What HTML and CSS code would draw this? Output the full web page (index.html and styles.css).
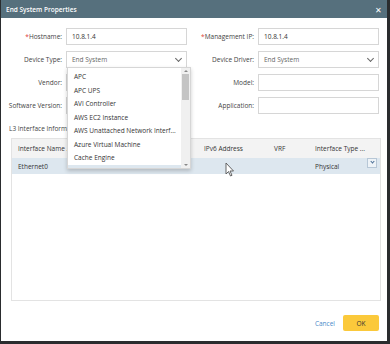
FILE: index.html
```html
<!DOCTYPE html>
<html lang="en">
<head>
  <meta charset="UTF-8">
  <title>End System Properties</title>
  <link rel="stylesheet" href="styles.css">
</head>
<body>
<div class="dialog">
  <div class="titlebar">
    <span>End System Properties</span>
    <span class="close">✕</span>
  </div>

  <div class="body">
    <div class="form">
      <div class="field"><label><i>*</i>Hostname:</label><div class="input">10.8.1.4</div></div>
      <div class="field"><label><i>*</i>Management IP:</label><div class="input">10.8.1.4</div></div>
      <div class="field"><label>Device Type:</label><div class="input select">End System<span class="caret"></span></div></div>
      <div class="field"><label>Device Driver:</label><div class="input select">End System<span class="caret"></span></div></div>
      <div class="field"><label>Vendor:</label><div class="input"></div></div>
      <div class="field"><label>Model:</label><div class="input"></div></div>
      <div class="field"><label>Software Version:</label><div class="input"></div></div>
      <div class="field"><label>Application:</label><div class="input"></div></div>
    </div>

    <div class="section">L3 Interface Information</div>

    <div class="table">
      <div class="row head">
        <div class="c1">Interface Name ...</div>
        <div class="c2"></div>
        <div class="c3">IPv6 Address</div>
        <div class="c4">VRF</div>
        <div class="c5">Interface Type ...</div>
      </div>
      <div class="row sel">
        <div class="c1">Ethernet0</div>
        <div class="c2"></div>
        <div class="c3"></div>
        <div class="c4"></div>
        <div class="c5">Physical<span class="mini"><span class="caret"></span></span></div>
      </div>
    </div>

    <div class="footer">
      <a class="cancel">Cancel</a>
      <button class="ok">OK</button>
    </div>

    <div class="dropdown">
      <ul>
        <li>APC</li>
        <li>APC UPS</li>
        <li>AVI Controller</li>
        <li>AWS EC2 Instance</li>
        <li>AWS Unattached Network Interf...</li>
        <li>Azure Virtual Machine</li>
        <li>Cache Engine</li>
        <li class="hl">End System</li>
      </ul>
      <div class="scroll"><span class="up"></span><span class="thumb"></span><span class="down"></span></div>
    </div>

    <svg class="cursor" width="10" height="15" viewBox="0 0 10 15">
      <path d="M1 1 L1 12 L3.5 9.5 L5.5 14 L7 13.3 L5 9 L8.5 9 Z" fill="#fff" stroke="#555" stroke-width="0.9"/>
    </svg>
  </div>
</div>
</body>
</html>
```

FILE: styles.css
```css
body {
  margin: 0;
  background: #2a2c2e;
  font-family: "Open Sans", "Liberation Sans", sans-serif;
  font-size: 6.5px;
  color: #333;
}
.dialog {
  width: 386px;
  height: 341px;
  margin-left: 1px;
  background: #fff;
  display: flex;
  flex-direction: column;
}
.titlebar {
  height: 18px;
  background: #56707d;
  color: #fff;
  font-weight: 600;
  display: flex;
  align-items: center;
  justify-content: space-between;
  padding: 0 5px 0 5px;
}
.close { font-size: 8px; font-weight: 400; }
.body {
  position: relative;
  flex: 1;
  display: flex;
  flex-direction: column;
}
.form {
  display: grid;
  grid-template-columns: 191px 188px;
  row-gap: 6px;
  padding-top: 10px;
}
.field {
  display: flex;
  align-items: center;
}
.field label {
  width: 61px;
  text-align: right;
  padding-right: 4px;
  color: #444;
  white-space: nowrap;
}
.field:nth-child(even) label { width: 62px; }
.field i { color: #e0423a; font-style: normal; }
.input {
  width: 114px;
  height: 15px;
  border: 1px solid #d6d6d6;
  padding-left: 5px;
  line-height: 15px;
  position: relative;
  color: #333;
}
.select { color: #666; }
.caret {
  position: absolute;
  right: 5px;
  top: 4px;
  width: 4px;
  height: 4px;
  border-right: 1px solid #666;
  border-bottom: 1px solid #666;
  transform: rotate(45deg);
}
.section {
  margin: 10px 0 0 8px;
  color: #444;
}
.table {
  margin: 5px 6px 0 10px;
  height: 161px;
  border: 1px solid #e3e3e3;
}
.row {
  display: flex;
  height: 18px;
  align-items: center;
}
.row.head { background: #f3f3f3; height: 19px; }
.row.sel { background: #dde7ef; height: 16px; }
.row > div { padding-left: 6px; white-space: nowrap; }
.c1 { width: 120px; }
.c2 { width: 54px; }
.c3 { width: 64px; }
.c4 { width: 35px; }
.c5 { flex: 1; position: relative; }
.mini {
  position: absolute;
  right: 3px;
  top: -4px;
  width: 8px;
  height: 8px;
  border: 1px solid #b7c7d6;
  background: #eef3f7;
}
.mini .caret { width: 2px; height: 2px; right: 2px; top: 1px; border-color: #4a6f96; }
.footer {
  display: flex;
  justify-content: flex-end;
  align-items: center;
  gap: 8px;
  padding: 14px 8px 0 0;
}
.cancel { color: #4a8ac9; }
.ok {
  width: 36px;
  height: 16px;
  border: none;
  border-radius: 2px;
  background: #fbc93b;
  font-family: inherit;
  font-size: 6.5px;
  color: #333;
  padding: 0;
}
.dropdown {
  position: absolute;
  left: 66px;
  top: 49px;
  width: 122px;
  height: 100px;
  background: #fff;
  border: 1px solid #d6d6d6;
  box-shadow: 0 2px 4px rgba(0,0,0,0.2);
  overflow: hidden;
  display: flex;
}
.dropdown ul {
  list-style: none;
  margin: 0;
  padding: 2px 0 0 0;
  flex: 1;
  min-width: 0;
  overflow: hidden;
}
.dropdown li {
  height: 13.5px;
  line-height: 13.5px;
  padding-left: 6px;
  white-space: nowrap;
  overflow: hidden;
}
.dropdown li.hl { background: #dde7ef; }
.scroll {
  width: 9px;
  flex: none;
  background: #f0f0f0;
  display: flex;
  flex-direction: column;
  align-items: center;
}
.thumb {
  width: 7px;
  height: 26px;
  background: #c4c4c4;
}
.up, .down {
  width: 0;
  height: 0;
  border-left: 2px solid transparent;
  border-right: 2px solid transparent;
  margin: 2px 0;
}
.up { border-bottom: 2px solid #888; }
.down { border-top: 2px solid #888; margin-top: auto; }
.cursor {
  position: absolute;
  left: 224px;
  top: 144px;
}
```
